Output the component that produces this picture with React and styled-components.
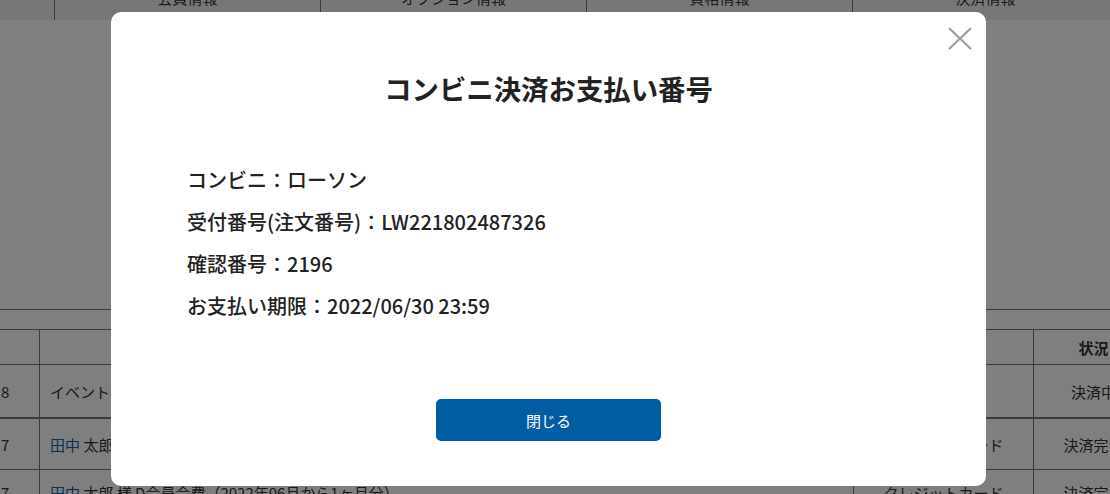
import React from "react";
import styled, { createGlobalStyle } from "styled-components";

const GlobalStyle = createGlobalStyle`
  html, body { margin: 0; padding: 0; }
  body {
    font-family: "Noto Sans CJK JP", "Noto Sans", sans-serif;
    color: #333;
    background: #fff;
    overflow: hidden;
  }
  * { box-sizing: border-box; }
`;

const Page = styled.div`
  width: 1110px;
  height: 494px;
  overflow: hidden;
  background: #fff;
  display: flex;
  flex-direction: column;
`;

const HeaderStrip = styled.div`
  display: grid;
  grid-template-columns: 54px repeat(4, 266px);
  height: 46px;
  margin-top: -26px;
  background: #eee;
  flex-shrink: 0;
`;

const HeaderCell = styled.div`
  border-left: ${(p) => (p.$first ? "none" : "1px solid #777")};
  display: flex;
  align-items: center;
  justify-content: center;
  font-size: 15px;
  color: #333;
`;

const Blank = styled.div`
  height: 289px;
  flex-shrink: 0;
`;

const Table = styled.div`
  width: 1153px;
  border-top: 1px solid #777;
  padding-top: 19px;
  flex-shrink: 0;
`;

const Row = styled.div`
  display: grid;
  grid-template-columns: 39px 814px 180px 120px;
  height: ${(p) => p.$h}px;
  border-top: ${(p) => (p.$thick ? "2px" : "1px")} solid #777;
  font-size: 15px;
  color: #333;
`;

const Cell = styled.div`
  display: flex;
  align-items: center;
  justify-content: ${(p) => p.$align || "center"};
  padding: 0 ${(p) => (p.$pad ? p.$pad : 0)}px;
  border-left: ${(p) => (p.$first ? "none" : "1px solid #777")};
  font-weight: ${(p) => (p.$bold ? 700 : 400)};
  white-space: nowrap;
  overflow: hidden;
`;

const Link = styled.span`
  color: #0b5ea8;
`;

const Overlay = styled.div`
  position: fixed;
  inset: 0;
  background: rgba(0, 0, 0, 0.5);
  display: flex;
  align-items: flex-start;
  justify-content: flex-start;
  padding: 12px 0 0 111px;
`;

const Modal = styled.div`
  position: relative;
  width: 875px;
  background: #fff;
  border-radius: 10px;
  padding: 57px 76px 45px;
  display: flex;
  flex-direction: column;
`;

const CloseButton = styled.button`
  position: absolute;
  top: 15px;
  right: 14px;
  width: 24px;
  height: 23px;
  padding: 0;
  border: none;
  background: transparent;
  cursor: pointer;
  display: block;
`;

const Title = styled.h2`
  margin: 0;
  font-size: 27.4px;
  line-height: 38px;
  font-weight: 700;
  color: #222;
  text-align: center;
`;

const InfoList = styled.div`
  margin-top: 58px;
  display: flex;
  flex-direction: column;
  gap: 12px;
`;

const InfoLine = styled.p`
  margin: 0;
  font-size: 20px;
  line-height: 30px;
  font-weight: 500;
  color: #222;
`;

const Footer = styled.div`
  margin-top: 78px;
  display: flex;
  justify-content: center;
`;

const PrimaryButton = styled.button`
  width: 225px;
  height: 42px;
  border: none;
  border-radius: 5px;
  background: #005da2;
  color: #fff;
  font-family: inherit;
  font-size: 15px;
  cursor: pointer;
`;

const rows = [
  { h: 35, no: "", desc: "", method: "", status: "状況", bold: true },
  { h: 53, no: "8", desc: <>イベント参加費</>, method: "", status: "決済中" },
  {
    h: 52,
    no: "7",
    desc: (
      <>
        <Link>田中</Link>&nbsp;太郎 様 D会員会費（2022年06月から1ヶ月分）
      </>
    ),
    method: "クレジットカード",
    status: "決済完了",
    thick: true,
  },
  {
    h: 46,
    no: "7",
    desc: (
      <>
        <Link>田中</Link>&nbsp;太郎 様 D会員会費（2022年06月から1ヶ月分）
      </>
    ),
    method: "クレジットカード",
    status: "決済完了",
  },
];

export default function App() {
  return (
    <>
      <GlobalStyle />
      <Page>
        <HeaderStrip>
          <HeaderCell $first />
          <HeaderCell>会員情報</HeaderCell>
          <HeaderCell>オプション情報</HeaderCell>
          <HeaderCell>資格情報</HeaderCell>
          <HeaderCell>決済情報</HeaderCell>
        </HeaderStrip>
        <Blank />
        <Table>
          {rows.map((r, i) => (
            <Row key={i} $h={r.h} $thick={r.thick}>
              <Cell $first $align="flex-start" $pad={1}>
                {r.no}
              </Cell>
              <Cell $align="flex-start" $pad={10}>
                {r.desc}
              </Cell>
              <Cell>{r.method}</Cell>
              <Cell $bold={r.bold}>{r.status}</Cell>
            </Row>
          ))}
        </Table>
      </Page>
      <Overlay>
        <Modal role="dialog" aria-modal="true">
          <CloseButton aria-label="閉じる">
            <svg width="24" height="23" viewBox="0 0 24 23">
              <path
                d="M1 1 L23 22 M23 1 L1 22"
                stroke="#9e9e9e"
                strokeWidth="2.2"
                fill="none"
              />
            </svg>
          </CloseButton>
          <Title>コンビニ決済お支払い番号</Title>
          <InfoList>
            <InfoLine>コンビニ：ローソン</InfoLine>
            <InfoLine>受付番号(注文番号)：LW221802487326</InfoLine>
            <InfoLine>確認番号：2196</InfoLine>
            <InfoLine>お支払い期限：2022/06/30 23:59</InfoLine>
          </InfoList>
          <Footer>
            <PrimaryButton>閉じる</PrimaryButton>
          </Footer>
        </Modal>
      </Overlay>
    </>
  );
}
